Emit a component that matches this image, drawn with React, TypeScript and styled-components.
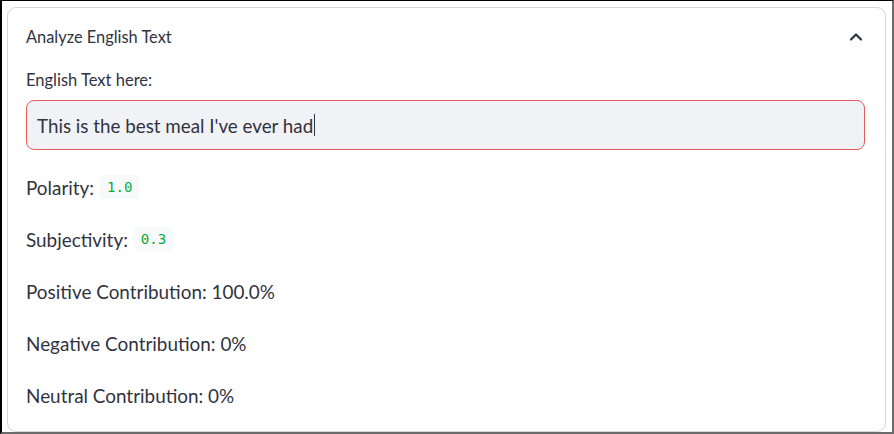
import React from "react";
import styled, { createGlobalStyle } from "styled-components";

const Global = createGlobalStyle`
  html, body { margin: 0; padding: 0; background: #fff; }
  body { font-family: Lato, "Noto Sans", sans-serif; color: #31333f; }
  * { box-sizing: border-box; }
`;

const Frame = styled.div`
  width: 894px;
  height: 434px;
  border-left: 2px solid #000;
  border-top: 1px solid #000;
  border-right: 2px solid #6b6b6b;
  border-bottom: 2px solid #6b6b6b;
  padding: 6px 6px 0 5px;
  background: #fff;
`;

const Expander = styled.div`
  border: 1px solid rgba(49, 51, 63, 0.2);
  border-radius: 9px;
  height: 425px;
  display: flex;
  flex-direction: column;
`;

const Header = styled.div`
  height: 57px;
  padding: 0 22px 0 18px;
  display: flex;
  align-items: center;
  justify-content: space-between;
  font-size: 16.4px;
  color: #31333f;
`;

const Body = styled.div`
  padding: 5px 20px 0 18px;
  display: flex;
  flex-direction: column;
`;

const Label = styled.div`
  height: 20px;
  line-height: 20px;
  font-size: 16.5px;
  color: #31333f;
`;

const Input = styled.div`
  margin-top: 10px;
  height: 50px;
  border: 1px solid #e45c5c;
  border-radius: 8px;
  background: #f0f2f6;
  display: flex;
  align-items: center;
  padding: 0 10px;
  font-size: 18.8px;
  color: #31333f;
`;

const Caret = styled.span`
  display: inline-block;
  width: 1px;
  height: 22px;
  background: #31333f;
  margin-left: 1px;
  vertical-align: middle;
`;

const Results = styled.div`
  margin-top: 23px;
  display: flex;
  flex-direction: column;
  gap: 24px;
`;

const Line = styled.div`
  height: 28px;
  display: flex;
  align-items: center;
  font-size: 18.9px;
  color: #31333f;
`;

const Code = styled.code`
  margin-left: 6px;
  background: #f8f9fb;
  color: #09ab3b;
  font-family: "DejaVu Sans Mono", "Liberation Mono", monospace;
  font-size: 14px;
  padding: 4px 7px;
  border-radius: 4px;
`;

export default function App() {
  return (
    <>
      <Global />
      <Frame>
        <Expander>
          <Header>
            <span>Analyze English Text</span>
            <svg width="14" height="14" viewBox="0 0 14 14">
              <path d="M2 9.5 L7 4.5 L12 9.5" fill="none" stroke="#31333f" strokeWidth="2.2" strokeLinecap="round" strokeLinejoin="round" />
            </svg>
          </Header>
          <Body>
            <Label>English Text here:</Label>
            <Input>
              This is the best meal I've ever had<Caret />
            </Input>
            <Results>
              <Line>Polarity: <Code>1.0</Code></Line>
              <Line>Subjectivity: <Code>0.3</Code></Line>
              <Line>Positive Contribution: 100.0%</Line>
              <Line>Negative Contribution: 0%</Line>
              <Line>Neutral Contribution: 0%</Line>
            </Results>
          </Body>
        </Expander>
      </Frame>
    </>
  );
}
